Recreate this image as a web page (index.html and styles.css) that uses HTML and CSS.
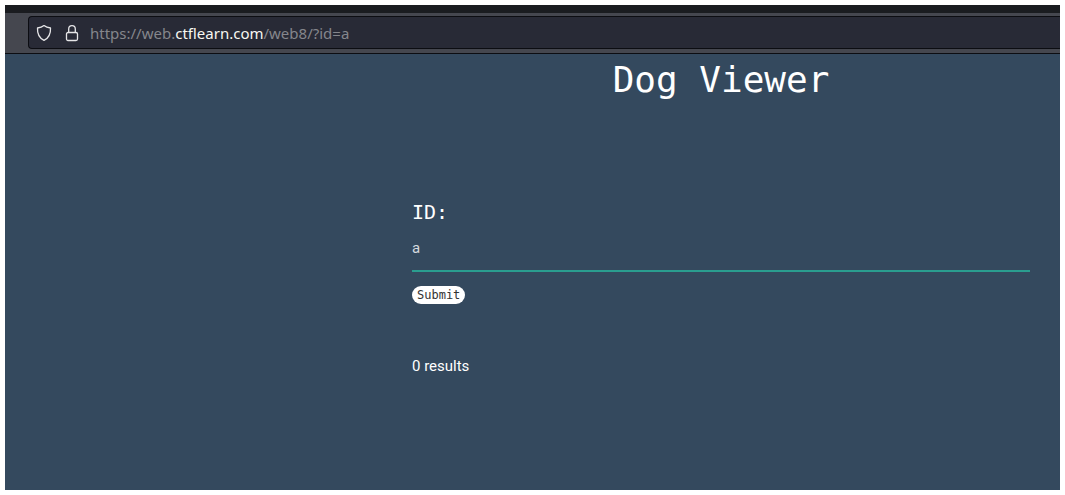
FILE: index.html
```
<!DOCTYPE html>
<html lang="en">
<head>
<meta charset="utf-8">
<title>Dog Viewer</title>
<link rel="stylesheet" href="styles.css">
</head>
<body>
<div class="window">
  <header class="toolbar">
    <div class="address">
      <svg class="icon" viewBox="0 0 16 18" aria-hidden="true"><path d="M8 1.6 C6.2 3 4 3.7 1.5 4 C1.2 9.5 3.2 14 8 16.4 C12.8 14 14.8 9.5 14.5 4 C12 3.7 9.8 3 8 1.6 Z"/></svg>
      <svg class="icon" viewBox="0 0 16 18" aria-hidden="true"><rect x="2.5" y="8.5" width="11" height="8" rx="1.5"/><path d="M4.7 8.5 V5 a3.3 3.3 0 0 1 6.6 0 V8.5"/></svg>
      <span class="url">https://web.<b class="domain">ctflearn.com</b>/web8/?id=a</span>
    </div>
  </header>
  <main class="page">
    <h1 class="title">Dog Viewer</h1>
    <form class="form">
      <label class="label" for="dog-id">ID:</label>
      <input class="field" id="dog-id" name="id" type="text" value="a">
      <button class="submit" type="submit">Submit</button>
    </form>
    <p class="results">0 results</p>
  </main>
</div>
</body>
</html>
```
FILE: styles.css
```
* {
  box-sizing: border-box;
}

body {
  margin: 0;
  padding: 5px;
  background: #fff;
  font-family: Roboto, "Liberation Sans", sans-serif;
}

.window {
  display: flex;
  flex-direction: column;
  min-height: calc(100vh - 10px);
  background: #34495e;
  color: #fff;
}

.toolbar {
  padding: 3px 0 4px 23px;
  border-top: 8px solid #1a1c20;
  border-bottom: 1px solid #0c0d12;
  background: #45474f;
}

.address {
  display: flex;
  align-items: center;
  gap: 12px;
  height: 33px;
  padding-left: 7px;
  border: 1px solid #0c0d12;
  border-right: 0;
  border-radius: 4px 0 0 4px;
  background: #282a36;
}

.icon {
  width: 16px;
  height: 18px;
  fill: none;
  stroke: #e6e6e8;
  stroke-width: 1.3;
  stroke-linejoin: round;
}

.url {
  margin-left: -2px;
  font: 15px/20px "Noto Sans", sans-serif;
  color: #85868c;
}

.domain {
  font-weight: 400;
  color: #f8f8f2;
}

.page {
  display: flex;
  flex-direction: column;
  padding: 0 30px 0 407px;
}

.title,
.label,
.submit {
  font-family: "DejaVu Sans Mono", monospace;
  font-weight: 400;
}

.title {
  margin: 0;
  font-size: 36px;
  line-height: 52px;
  text-align: center;
}

.form {
  display: flex;
  flex-direction: column;
  align-items: flex-start;
  margin-top: 92px;
}

.label {
  font-size: 20px;
  line-height: 28px;
}

.field {
  width: 100%;
  height: 46px;
  padding: 0;
  border: 0;
  border-bottom: 2px solid #2a9d8f;
  background: transparent;
  color: #d5dadf;
  font: 15px Roboto, sans-serif;
  outline: 0;
}

.submit {
  margin-top: 14px;
  padding: 0 5px;
  border: 0;
  border-radius: 9px;
  background: #fff;
  color: #333;
  font-size: 12px;
  line-height: 18px;
}

.results {
  margin: 52px 0 0;
  font-size: 15px;
  line-height: 20px;
}
```
